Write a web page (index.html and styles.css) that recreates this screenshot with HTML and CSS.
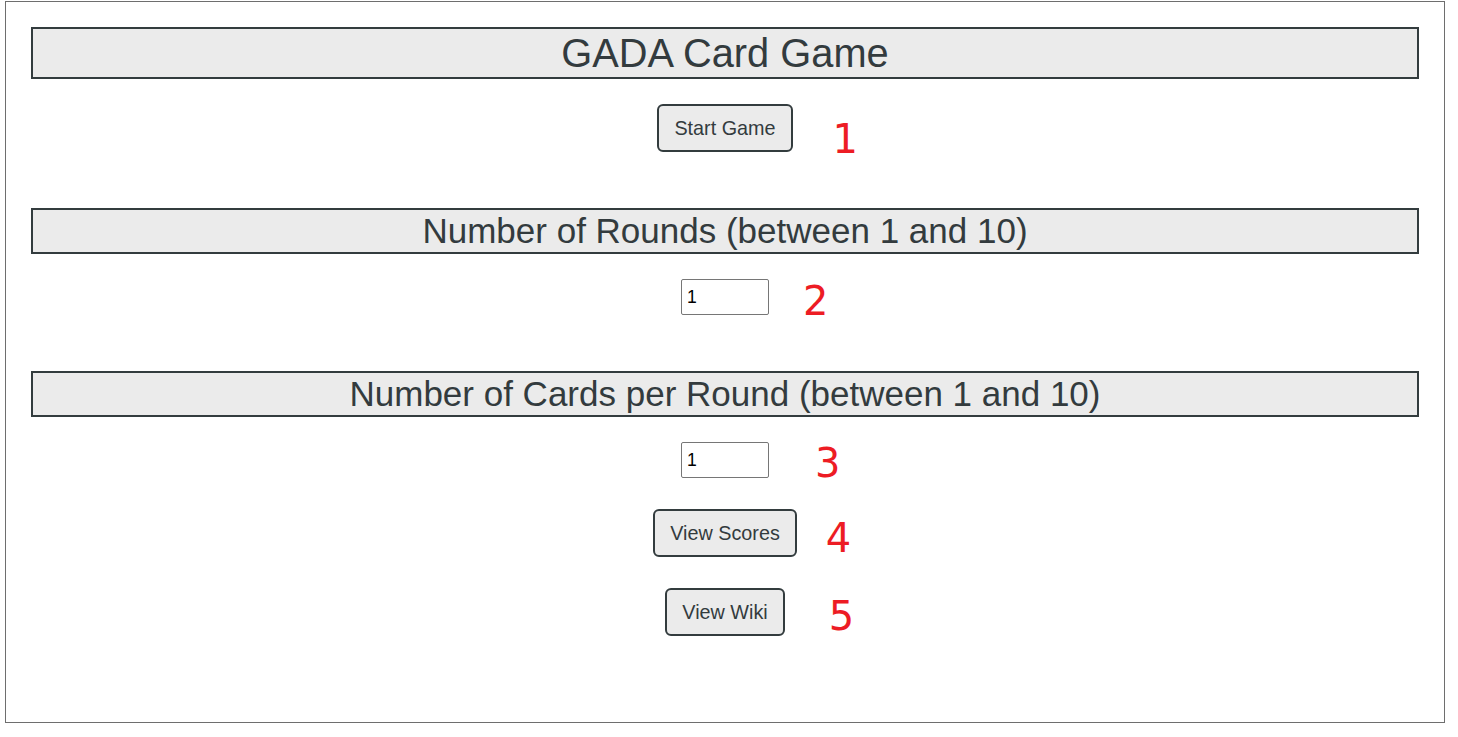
FILE: index.html
```html
<!DOCTYPE html>
<html lang="en">
<head>
<meta charset="utf-8">
<title>GADA Card Game</title>
<link rel="stylesheet" href="styles.css">
</head>
<body>
<div class="frame">
  <h1 class="title-box">GADA Card Game</h1>
  <div class="row row-start">
    <span class="anchor">
      <button class="btn" type="button">Start Game</button>
      <span class="mark mark-1">1</span>
    </span>
  </div>
  <h2 class="section-box section-rounds">Number of Rounds (between 1 and 10)</h2>
  <div class="row row-input">
    <span class="anchor">
      <input class="num" type="number" value="1" min="1" max="10">
      <span class="mark mark-2">2</span>
    </span>
  </div>
  <h2 class="section-box section-cards">Number of Cards per Round (between 1 and 10)</h2>
  <div class="row row-input">
    <span class="anchor">
      <input class="num" type="number" value="1" min="1" max="10">
      <span class="mark mark-3">3</span>
    </span>
  </div>
  <div class="row row-scores">
    <span class="anchor">
      <button class="btn" type="button">View Scores</button>
      <span class="mark mark-4">4</span>
    </span>
  </div>
  <div class="row row-wiki">
    <span class="anchor">
      <button class="btn" type="button">View Wiki</button>
      <span class="mark mark-5">5</span>
    </span>
  </div>
</div>
</body>
</html>
```

FILE: styles.css
```css
html, body {
  margin: 0;
  padding: 0;
  background: #ffffff;
}

body {
  font-family: "Liberation Sans", Arial, sans-serif;
  color: #333b3e;
}

.frame {
  box-sizing: border-box;
  width: 1440px;
  height: 722px;
  margin: 1px 0 0 5px;
  border: 1px solid #6e6e6e;
  padding: 25px 25px 0 25px;
  display: flex;
  flex-direction: column;
}

.title-box,
.section-box {
  margin: 0;
  box-sizing: border-box;
  background: #ebebeb;
  border: 2px solid #333c3e;
  text-align: center;
  font-weight: normal;
  color: #333b3e;
  white-space: nowrap;
}

.title-box {
  height: 52px;
  line-height: 48px;
  font-size: 39.8px;
}

.section-box {
  height: 46px;
  line-height: 42px;
  font-size: 35px;
}

.section-rounds {
  margin-top: 56px;
}

.section-cards {
  margin-top: 56px;
}

.row {
  display: flex;
  justify-content: center;
}

.row-start {
  margin-top: 25px;
}

.row-input {
  margin-top: 25px;
}

.row-scores {
  margin-top: 31px;
}

.row-wiki {
  margin-top: 31px;
}

.anchor {
  position: relative;
  display: inline-flex;
}

.btn {
  box-sizing: border-box;
  height: 48px;
  padding: 0 15px;
  margin: 0;
  background: #ebebeb;
  border: 2px solid #333c3e;
  border-radius: 6px;
  font-family: "Liberation Sans", Arial, sans-serif;
  font-size: 19.8px;
  color: #333b3e;
  cursor: pointer;
}

.num {
  box-sizing: border-box;
  width: 88px;
  height: 36px;
  margin: 0;
  padding: 0 2px 0 5px;
  border: 1px solid #767676;
  border-radius: 2px;
  background: #ffffff;
  font-family: "Liberation Sans", Arial, sans-serif;
  font-size: 17.6px;
  color: #000000;
  -moz-appearance: textfield;
  appearance: textfield;
}

.num::-webkit-outer-spin-button,
.num::-webkit-inner-spin-button {
  -webkit-appearance: none;
  margin: 0;
}

.mark {
  position: absolute;
  font-family: "DejaVu Sans", sans-serif;
  font-size: 40px;
  line-height: 40px;
  color: #ed1c24;
}

.mark-1 {
  left: calc(100% + 40px);
  top: 15px;
}

.mark-2 {
  left: calc(100% + 34px);
  top: 2px;
}

.mark-3 {
  left: calc(100% + 46px);
  top: 1px;
}

.mark-4 {
  left: calc(100% + 29px);
  top: 9px;
}

.mark-5 {
  left: calc(100% + 44px);
  top: 8px;
}
```
